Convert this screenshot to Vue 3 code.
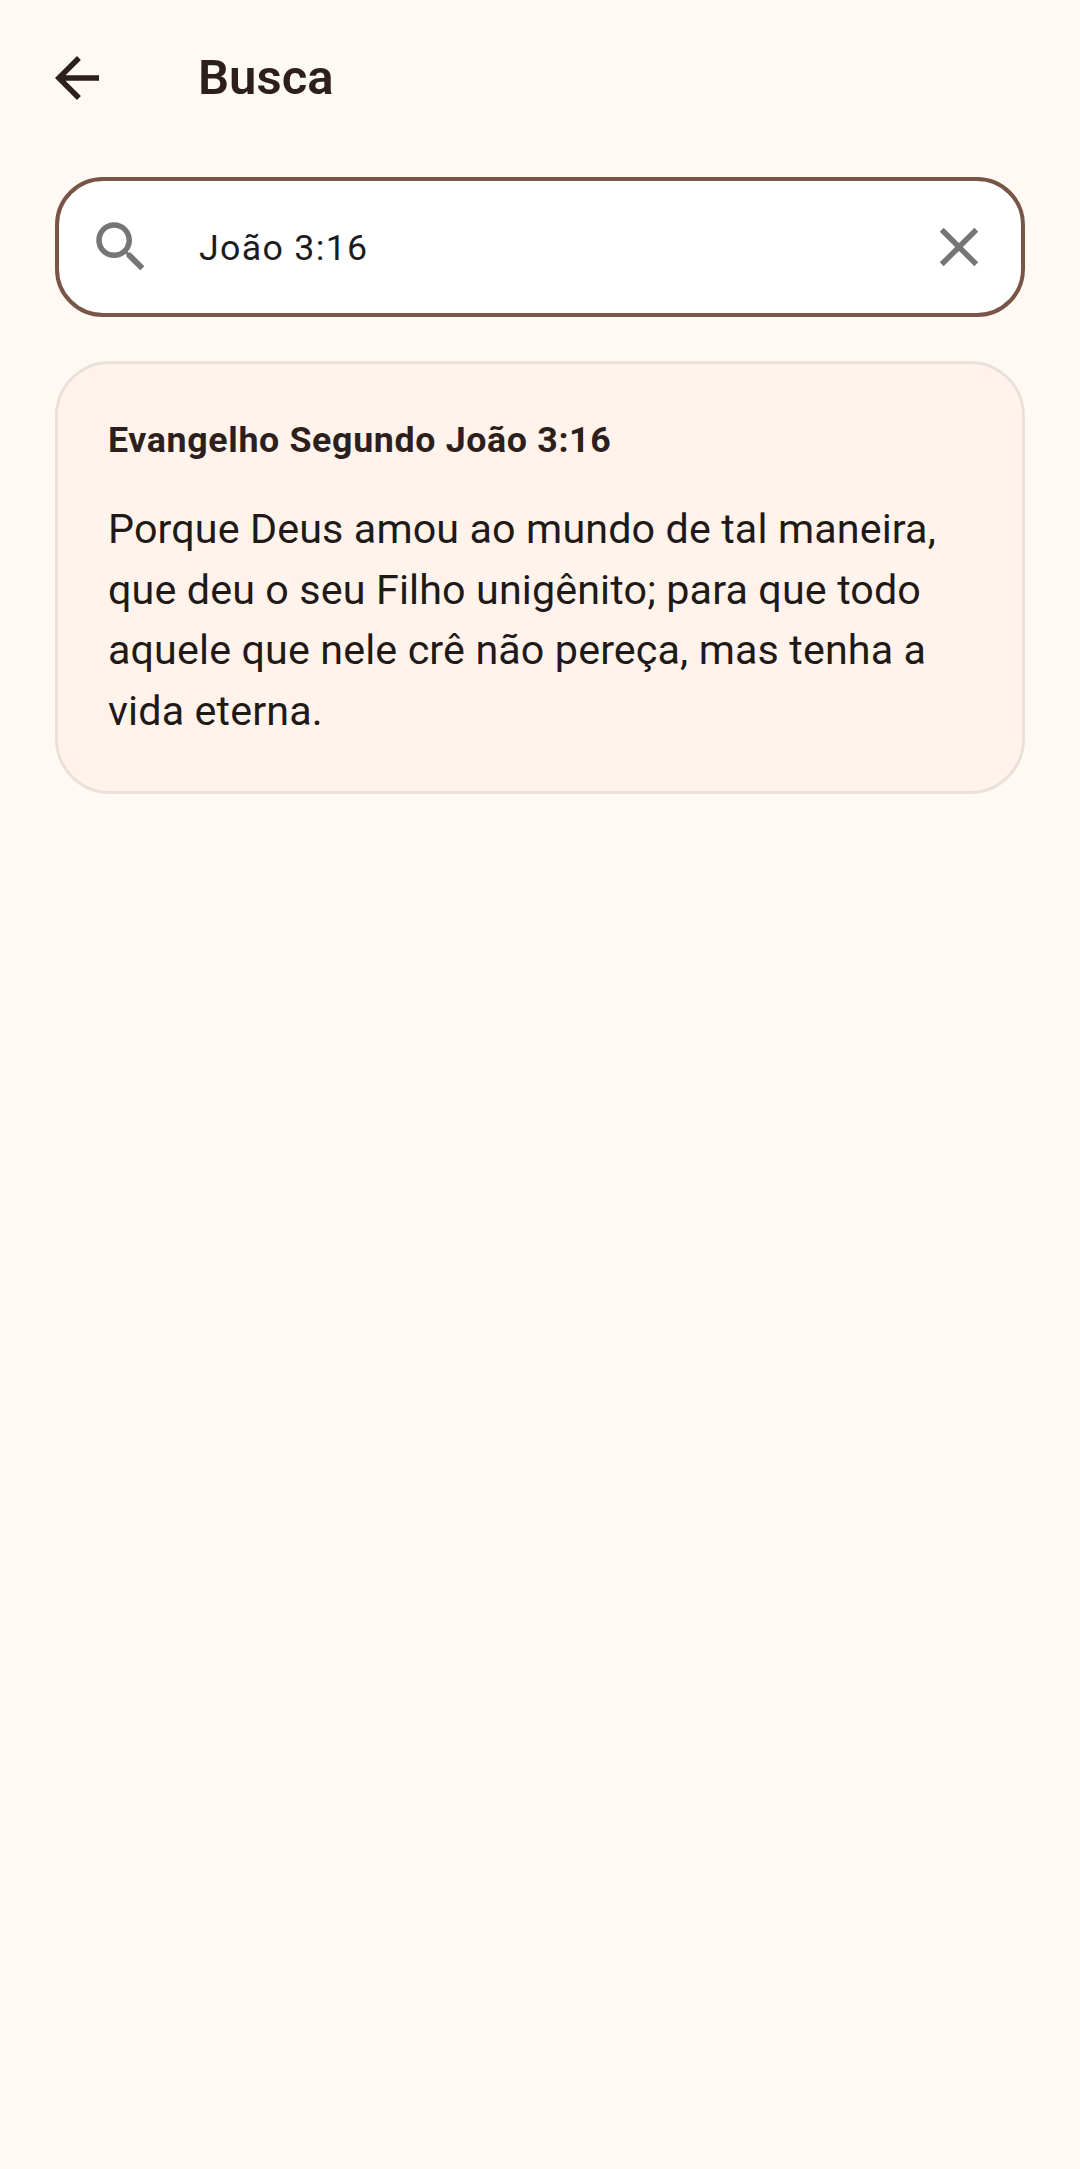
<script setup>
const verse = 'Porque Deus amou ao mundo de tal maneira, que deu o seu Filho unigênito; para que todo aquele que nele crê não pereça, mas tenha a vida eterna.'
</script>

<template>
  <main class="page">
    <header class="bar">
      <button class="back" aria-label="Voltar">
        <svg viewBox="0 0 24 24" class="icon"><path d="M20 11H7.83l5.59-5.59L12 4l-8 8 8 8 1.41-1.41L7.83 13H20v-2z" /></svg>
      </button>
      <h1 class="title">Busca</h1>
    </header>
    <section class="content">
      <div class="search">
        <svg viewBox="0 0 24 24" class="icon grey"><path d="M15.5 14h-.79l-.28-.27C15.41 12.59 16 11.11 16 9.5 16 5.91 13.09 3 9.5 3S3 5.91 3 9.5 5.91 16 9.5 16c1.61 0 3.09-.59 4.23-1.57l.27.28v.79l5 4.99L20.49 19l-4.99-5zm-6 0C7.01 14 5 11.99 5 9.5S7.01 5 9.5 5 14 7.01 14 9.5 11.99 14 9.5 14z" /></svg>
        <span class="query">João 3:16</span>
        <svg viewBox="0 0 24 24" class="icon grey"><path d="M19 6.41 17.59 5 12 10.59 6.41 5 5 6.41 10.59 12 5 17.59 6.41 19 12 13.41 17.59 19 19 17.59 13.41 12z" /></svg>
      </div>
      <article class="card">
        <h2 class="ref">Evangelho Segundo João 3:16</h2>
        <p class="verse">{{ verse }}</p>
      </article>
    </section>
  </main>
</template>

<style>
html, body { margin: 0; background: #fff9f3; }
</style>

<style scoped>
.page {
  min-height: 2169px;
  background: #fff9f3;
  font-family: Roboto, sans-serif;
  box-sizing: border-box;
}
.bar {
  height: 155px;
  display: flex;
  align-items: center;
  padding-left: 44px;
  box-sizing: border-box;
}
.back {
  width: 66px;
  height: 66px;
  padding: 0;
  border: 0;
  background: none;
  margin-right: 88px;
}
.icon {
  width: 66px;
  height: 66px;
  display: block;
  flex: none;
  fill: #2d1f1b;
}
.grey { fill: #757575; }
.title {
  margin: 0 0 1px;
  font-size: 49px;
  font-weight: 600;
  color: #2d1f1b;
}
.content {
  padding: 22px 55px 0;
  display: flex;
  flex-direction: column;
  gap: 44px;
}
.search {
  height: 140px;
  box-sizing: border-box;
  border: 4px solid #795548;
  border-radius: 48px;
  background: #fff;
  display: flex;
  align-items: center;
  padding: 0 29px;
}
.query {
  flex: 1;
  margin-left: 45px;
  padding-top: 2px;
  font-size: 35.75px;
  letter-spacing: 1.3px;
  color: #1c1b1f;
}
.card {
  background: #fff3ec;
  border: 3px solid #ebe0da;
  border-radius: 55px;
  padding: 52px 50px 50px;
}
.ref {
  margin: 0 0 35px;
  font-size: 35.75px;
  line-height: 48px;
  font-weight: 700;
  letter-spacing: 0.65px;
  color: #2d1f1b;
}
.verse {
  margin: 0;
  font-size: 41.25px;
  line-height: 60.5px;
  letter-spacing: 0.12px;
  color: #1f1a18;
}
</style>
